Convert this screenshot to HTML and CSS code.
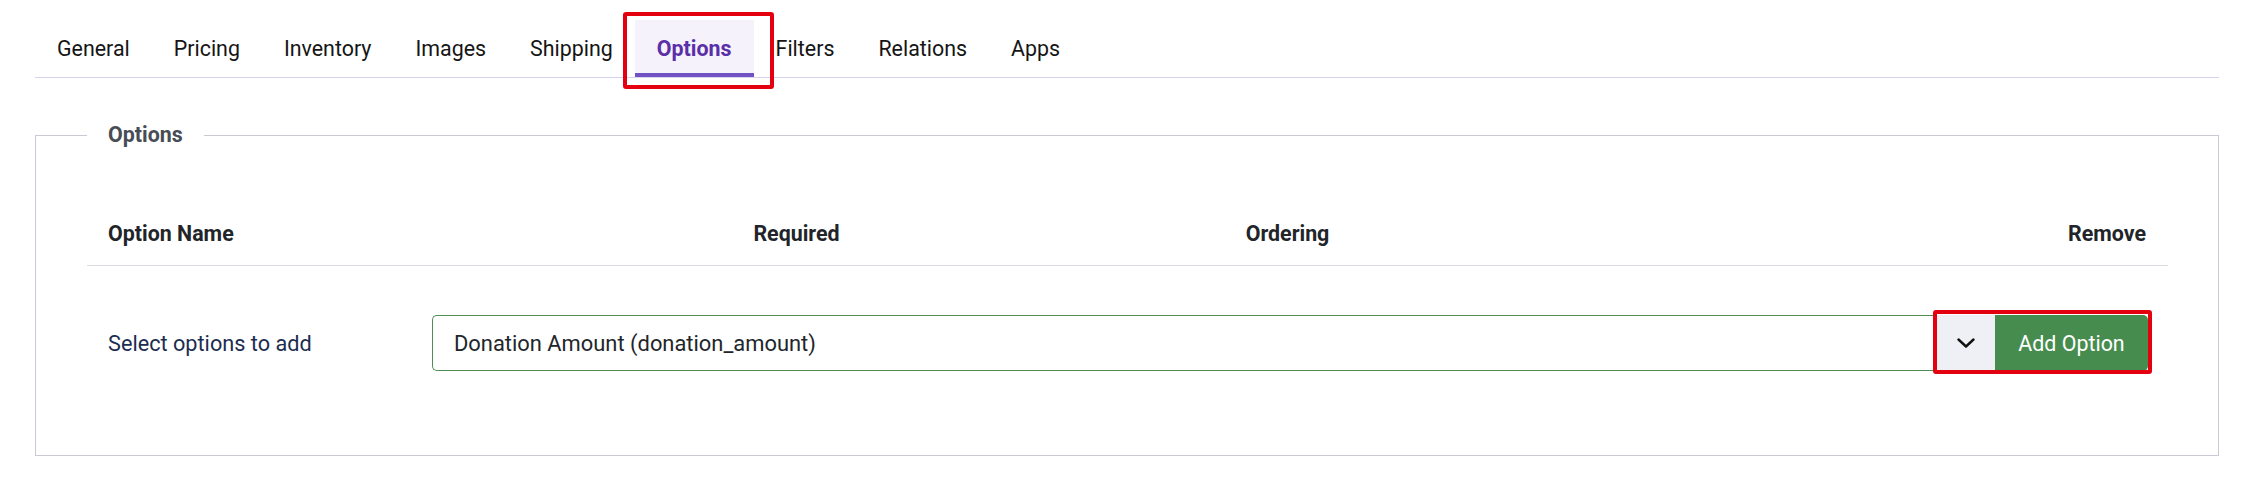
FILE: index.html
```html
<!DOCTYPE html>
<html lang="en">
<head>
<meta charset="utf-8">
<title>Product – Options</title>
<link rel="stylesheet" href="styles.css">
</head>
<body>
<div class="page">
  <nav class="tabs">
    <a class="tab">General</a>
    <a class="tab">Pricing</a>
    <a class="tab">Inventory</a>
    <a class="tab">Images</a>
    <a class="tab">Shipping</a>
    <a class="tab tab-active">Options</a>
    <a class="tab">Filters</a>
    <a class="tab">Relations</a>
    <a class="tab">Apps</a>
  </nav>

  <fieldset class="panel">
    <legend class="panel-title">Options</legend>
    <div class="opt-table">
      <div class="opt-head">
        <div class="th">Option Name</div>
        <div class="th th-center">Required</div>
        <div class="th th-center">Ordering</div>
        <div class="th th-right">Remove</div>
      </div>
      <div class="opt-row">
        <div class="row-label">Select options to add</div>
        <div class="input-group">
          <div class="select-box">Donation Amount (donation_amount)</div>
          <div class="actions">
            <span class="caret">
              <svg width="18" height="10" viewBox="0 0 18 10"><polyline points="1.5,1.5 9,8.5 16.5,1.5" fill="none" stroke="#111" stroke-width="2.4" stroke-linecap="round" stroke-linejoin="round"/></svg>
            </span>
            <button class="btn-add">Add Option</button>
          </div>
        </div>
      </div>
    </div>
  </fieldset>
</div>
</body>
</html>
```

FILE: styles.css
```css
* { box-sizing: border-box; }

body {
  margin: 0;
  background: #ffffff;
  font-family: Roboto, "Liberation Sans", Arial, sans-serif;
  font-size: 21.4px;
  color: #1c1c1c;
}

.page {
  padding: 0 22px 0 35px;
}

/* tab strip */
.tabs {
  display: flex;
  padding-top: 20px;
  border-bottom: 1px solid #d7d3ee;
}

.tab {
  position: relative;
  display: flex;
  align-items: center;
  height: 57px;
  padding: 0 22px;
  color: #151515;
  line-height: 26px;
}

.tab-active {
  background: #f5f2fb;
  color: #5a2fa8;
  font-weight: 700;
  box-shadow: inset 0 -4px 0 #7152c2;
}

/* highlight frame around the active tab */
.tab-active::after {
  content: "";
  position: absolute;
  left: -12px;
  right: -20px;
  top: -8px;
  bottom: -12px;
  border: 4px solid #e3000f;
  border-radius: 3px;
}

/* options panel */
.panel {
  margin: 44px 0 0 0;
  padding: 53px 50px 35px 51px;
  border: 1px solid #c8cbd6;
  min-width: 0;
}

.panel-title {
  padding: 0 21px;
  font-weight: 700;
  line-height: 26px;
  color: #474d55;
}

.opt-head {
  display: grid;
  grid-template-columns: 443px 491px 491px 1fr;
  align-items: center;
  height: 65px;
  padding: 0 22px 0 21px;
  border-bottom: 1px solid #dcdde3;
}

.th {
  font-weight: 700;
  color: #212529;
}

.th-center { text-align: center; }
.th-right { text-align: right; }

.opt-row {
  display: flex;
  align-items: center;
  padding: 49px 20px 49px 0;
  font-size: 21.7px;
}

.row-label {
  width: 345px;
  padding-left: 21px;
  color: #1b2d50;
}

.input-group {
  flex: 1;
  display: flex;
  height: 56px;
}

.select-box {
  flex: 1;
  display: flex;
  align-items: center;
  padding-left: 21px;
  border: 1px solid #4f8d55;
  border-right: none;
  border-radius: 5px 0 0 5px;
  color: #22262a;
  font-size: 21.9px;
}

.actions {
  position: relative;
  display: flex;
}

/* highlight frame around the add controls */
.actions::after {
  content: "";
  position: absolute;
  left: -4px;
  right: -4px;
  top: -5px;
  bottom: -3px;
  border: 4px solid #e3000f;
  border-radius: 3px;
  pointer-events: none;
}

.caret {
  display: flex;
  align-items: center;
  justify-content: center;
  width: 58px;
  background: #eef0f6;
}

.btn-add {
  width: 153px;
  border: none;
  border-radius: 0 5px 5px 0;
  background: #478c4f;
  color: #ffffff;
  font-family: inherit;
  font-size: 21.4px;
  padding: 0;
}
```
